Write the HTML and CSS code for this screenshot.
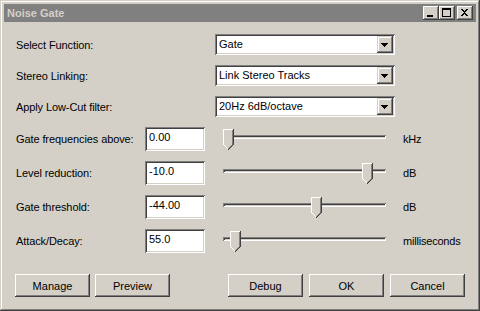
FILE: index.html
```html
<!DOCTYPE html>
<html>
<head>
<meta charset="utf-8">
<link rel="stylesheet" href="styles.css">
</head>
<body>
<div class="window">
  <div class="titlebar">
    <span class="title">Noise Gate</span>
    <div class="caption-btns">
      <span class="cap-btn"><svg width="16" height="14" viewBox="0 0 16 14"><path d="M4 9h6v2H4z" fill="#000"/></svg></span>
      <span class="cap-btn"><svg width="16" height="14" viewBox="0 0 16 14"><path d="M3 2h9v9H3z M4 4v6h7V4z" fill="#000" fill-rule="evenodd"/></svg></span>
      <span class="cap-btn close"><svg width="16" height="14" viewBox="0 0 16 14"><path d="M4 3h2v1h1v1h1V4h1V3h2v1h-1v1H9v1H8v1h1v1h1v1h1v1H9V9H8V8H7v1H6v1H4V9h1V8h1V7h1V6H6V5H5V4H4z" fill="#000"/></svg></span>
    </div>
  </div>
  <div class="client">
    <div class="combo-grid">
      <span class="label">Select Function:</span>
      <div class="combo"><span class="combo-text">Gate</span><span class="drop"><svg width="16" height="17" viewBox="0 0 16 17"><path d="M4 7h7v1h-1v1H9v1H8v1H7v-1H6V9H5V8H4z" fill="#000"/></svg></span></div>
      <span class="label">Stereo Linking:</span>
      <div class="combo"><span class="combo-text">Link Stereo Tracks</span><span class="drop"><svg width="16" height="17" viewBox="0 0 16 17"><path d="M4 7h7v1h-1v1H9v1H8v1H7v-1H6V9H5V8H4z" fill="#000"/></svg></span></div>
      <span class="label">Apply Low-Cut filter:</span>
      <div class="combo"><span class="combo-text">20Hz 6dB/octave</span><span class="drop"><svg width="16" height="17" viewBox="0 0 16 17"><path d="M4 7h7v1h-1v1H9v1H8v1H7v-1H6V9H5V8H4z" fill="#000"/></svg></span></div>
    </div>
    <div class="slider-grid">
      <span class="label">Gate frequencies above:</span>
      <div class="textbox">0.00</div>
      <div class="slider"><div class="track"></div><span class="thumb" style="left:18px"><svg width="11" height="21" viewBox="0 0 11 21"><path d="M1 1h8v15H1z M2 16h6v1H2z M3 17h4v1H3z M4 18h2v1H4z" fill="#d4d0c8"/><path d="M0 0h10v1H1v15H0z M1 16h1v1H1z M2 17h1v1H2z M3 18h1v1H3z M4 19h1v1H4z" fill="#fff"/><path d="M9 1h1v15H9z M8 16h1v1H8z M7 17h1v1H7z M6 18h1v1H6z M5 19h1v1H5z" fill="#808080"/><path d="M10 0h1v16h-1z M9 16h1v1H9z M8 17h1v1H8z M7 18h1v1H7z M6 19h1v1H6z M5 20h1v1H5z" fill="#404040"/></svg></span></div>
      <span class="unit">kHz</span>

      <span class="label">Level reduction:</span>
      <div class="textbox">-10.0</div>
      <div class="slider"><div class="track"></div><span class="thumb" style="left:157px"><svg width="11" height="21" viewBox="0 0 11 21"><path d="M1 1h8v15H1z M2 16h6v1H2z M3 17h4v1H3z M4 18h2v1H4z" fill="#d4d0c8"/><path d="M0 0h10v1H1v15H0z M1 16h1v1H1z M2 17h1v1H2z M3 18h1v1H3z M4 19h1v1H4z" fill="#fff"/><path d="M9 1h1v15H9z M8 16h1v1H8z M7 17h1v1H7z M6 18h1v1H6z M5 19h1v1H5z" fill="#808080"/><path d="M10 0h1v16h-1z M9 16h1v1H9z M8 17h1v1H8z M7 18h1v1H7z M6 19h1v1H6z M5 20h1v1H5z" fill="#404040"/></svg></span></div>
      <span class="unit">dB</span>

      <span class="label">Gate threshold:</span>
      <div class="textbox">-44.00</div>
      <div class="slider"><div class="track"></div><span class="thumb" style="left:106px"><svg width="11" height="21" viewBox="0 0 11 21"><path d="M1 1h8v15H1z M2 16h6v1H2z M3 17h4v1H3z M4 18h2v1H4z" fill="#d4d0c8"/><path d="M0 0h10v1H1v15H0z M1 16h1v1H1z M2 17h1v1H2z M3 18h1v1H3z M4 19h1v1H4z" fill="#fff"/><path d="M9 1h1v15H9z M8 16h1v1H8z M7 17h1v1H7z M6 18h1v1H6z M5 19h1v1H5z" fill="#808080"/><path d="M10 0h1v16h-1z M9 16h1v1H9z M8 17h1v1H8z M7 18h1v1H7z M6 19h1v1H6z M5 20h1v1H5z" fill="#404040"/></svg></span></div>
      <span class="unit">dB</span>

      <span class="label">Attack/Decay:</span>
      <div class="textbox">55.0</div>
      <div class="slider"><div class="track"></div><span class="thumb" style="left:25px"><svg width="11" height="21" viewBox="0 0 11 21"><path d="M1 1h8v15H1z M2 16h6v1H2z M3 17h4v1H3z M4 18h2v1H4z" fill="#d4d0c8"/><path d="M0 0h10v1H1v15H0z M1 16h1v1H1z M2 17h1v1H2z M3 18h1v1H3z M4 19h1v1H4z" fill="#fff"/><path d="M9 1h1v15H9z M8 16h1v1H8z M7 17h1v1H7z M6 18h1v1H6z M5 19h1v1H5z" fill="#808080"/><path d="M10 0h1v16h-1z M9 16h1v1H9z M8 17h1v1H8z M7 18h1v1H7z M6 19h1v1H6z M5 20h1v1H5z" fill="#404040"/></svg></span></div>
      <span class="unit">milliseconds</span>
    </div>
    <div class="button-row">
      <div class="btn-group">
        <button class="btn">Manage</button>
        <button class="btn">Preview</button>
      </div>
      <div class="btn-group wide">
        <button class="btn">Debug</button>
        <button class="btn">OK</button>
        <button class="btn">Cancel</button>
      </div>
    </div>
  </div>
</div>
</body>
</html>
```
FILE: styles.css
```css
html, body {
  margin: 0;
  padding: 0;
  background: #d4d0c8;
}

.window {
  width: 480px;
  height: 311px;
  box-sizing: border-box;
  padding: 4px;
  background: #d4d0c8;
  box-shadow: inset -1px -1px #404040, inset 1px 1px #d4d0c8, inset -2px -2px #808080, inset 2px 2px #ffffff;
  display: flex;
  flex-direction: column;
  font: 11px "Liberation Sans", Arial, sans-serif;
  color: #000;
}

.titlebar {
  height: 18px;
  flex: none;
  margin-bottom: 1px;
  background: #808080;
  color: #d4d0c8;
  display: flex;
  align-items: center;
  padding: 0 3px 0 3px;
}

.title {
  font-weight: bold;
  flex: 1;
  line-height: 18px;
}

.caption-btns {
  display: flex;
  align-items: center;
}

.cap-btn {
  width: 16px;
  height: 14px;
  display: block;
  background: #d4d0c8;
  box-shadow: inset -1px -1px #404040, inset 1px 1px #ffffff, inset -2px -2px #808080, inset 2px 2px #d4d0c8;
}

.cap-btn svg { display: block; }

.cap-btn.close { margin-left: 2px; }

.client {
  flex: 1;
  padding: 11px 11px 0 12px;
  display: flex;
  flex-direction: column;
}

.combo-grid {
  display: grid;
  grid-template-columns: 199px 180px;
  grid-auto-rows: 21px;
  row-gap: 10px;
  align-items: center;
}

.label {
  white-space: nowrap;
  letter-spacing: -0.1px;
}

.combo {
  width: 180px;
  height: 21px;
  box-sizing: border-box;
  padding: 2px;
  background: #fff;
  box-shadow: inset 1px 1px #808080, inset -1px -1px #ffffff, inset 2px 2px #404040, inset -2px -2px #d4d0c8;
  display: flex;
}

.combo-text {
  flex: 1;
  line-height: 17px;
  padding-left: 2px;
}

.drop {
  width: 16px;
  height: 17px;
  display: block;
  background: #d4d0c8;
  box-shadow: inset -1px -1px #404040, inset 1px 1px #d4d0c8, inset -2px -2px #808080, inset 2px 2px #ffffff;
}

.drop svg { display: block; }

.slider-grid {
  margin-top: 10px;
  display: grid;
  grid-template-columns: 129px 60px 198px auto;
  grid-auto-rows: 24px;
  row-gap: 10px;
  align-items: center;
}

.textbox {
  width: 60px;
  height: 24px;
  box-sizing: border-box;
  padding: 4px 3px 0 4px;
  line-height: 13px;
  background: #fff;
  box-shadow: inset 1px 1px #808080, inset -1px -1px #ffffff, inset 2px 2px #404040, inset -2px -2px #d4d0c8;
}

.slider {
  position: relative;
  height: 24px;
}

.track {
  margin: 8px 0 0 18px;
  width: 163px;
  height: 4px;
  background: #d4d0c8;
  box-shadow: inset 1px 1px #808080, inset -1px -1px #ffffff, inset 2px 2px #404040, inset -2px -2px #d4d0c8;
}

.thumb {
  position: absolute;
  top: 2px;
  width: 11px;
  height: 21px;
}

.thumb svg { display: block; }

.unit {
  white-space: nowrap;
  letter-spacing: -0.2px;
}

.button-row {
  margin-top: 21px;
  display: flex;
  justify-content: space-between;
}

.btn-group {
  display: flex;
  gap: 5px;
  margin-left: -1px;
}

.btn-group.wide {
  gap: 6px;
  margin-left: 0;
}

.btn {
  width: 75px;
  height: 23px;
  box-sizing: border-box;
  border: 0;
  padding: 0;
  margin: 0;
  background: #d4d0c8;
  font: 11px "Liberation Sans", Arial, sans-serif;
  color: #000;
  box-shadow: inset -1px -1px #404040, inset 1px 1px #ffffff, inset -2px -2px #808080, inset 2px 2px #d4d0c8;
}
```
